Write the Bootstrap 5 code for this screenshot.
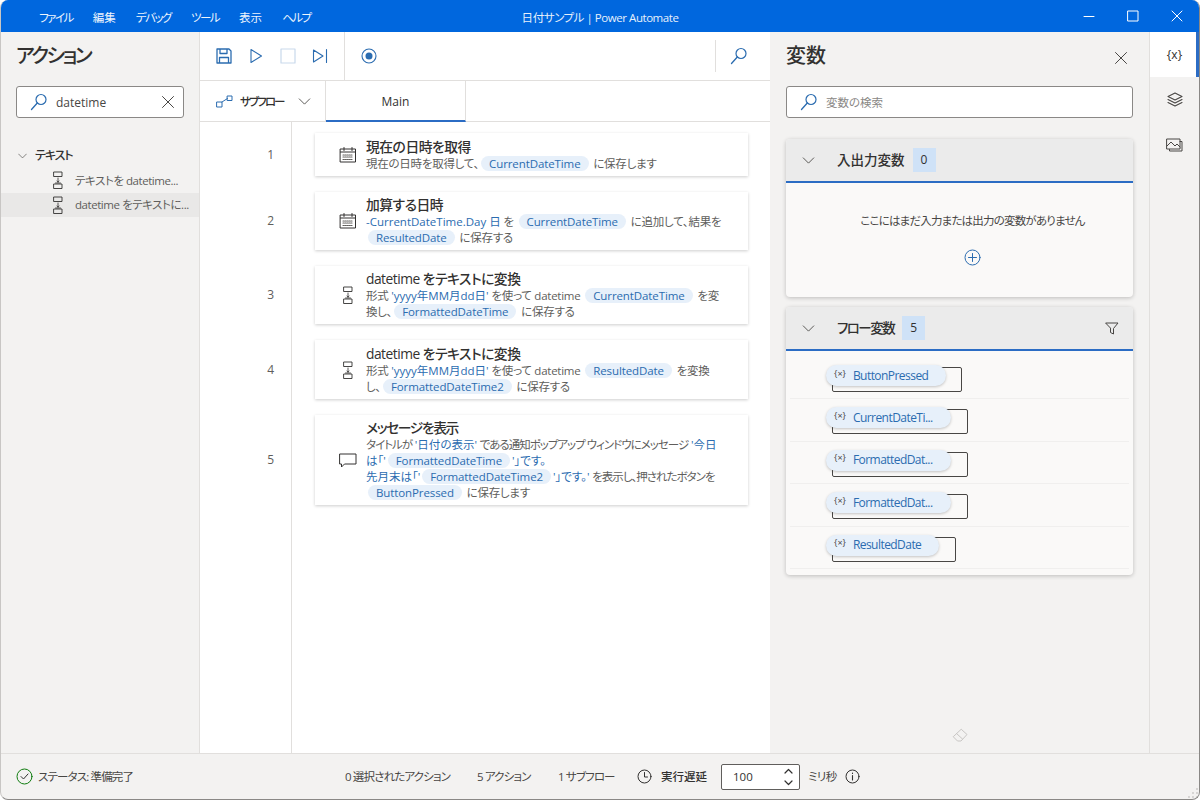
<!DOCTYPE html>
<html lang="ja">
<head>
<meta charset="utf-8">
<title>日付サンプル | Power Automate</title>
<link rel="stylesheet" href="https://cdn.jsdelivr.net/npm/bootstrap@5.3.0/dist/css/bootstrap.min.css">
<style>
html,body{height:800px;overflow:hidden;background:#fff}
body{font-family:"Open Sans","Noto Sans CJK JP",sans-serif;font-feature-settings:"palt";font-size:12px;color:#323130}
svg{display:block;flex:none;fill:none;stroke-linecap:round;stroke-linejoin:round}
.pa-win{width:1200px;height:800px;border-radius:8px;overflow:hidden;border-right:1px solid #8a8886;border-bottom:1px solid #8a8886;border-left:1px solid #c8c6c4;background:#f3f2f1}
.pa-title{height:32px;flex:none;background:#0067de;color:#fff;position:relative}
.pa-menu{padding-left:38px;gap:20px;font-size:11.5px;color:#eef5fd}
.pa-kana{letter-spacing:-1.5px}
.pa-wintitle{position:absolute;left:0;right:0;top:0;line-height:35px;text-align:center;font-size:11.5px;letter-spacing:-.45px;color:#e6f0fb}
.pa-winbtns{position:absolute;right:0;top:0;height:32px}
.pa-winbtns span{width:44px;display:flex;align-items:center;justify-content:center}
.pa-main{height:721px;flex:none}
.pa-left{width:199px;flex:none;border-right:1px solid #e1dfdd}
.pa-h{font-size:20px;font-weight:500;color:#323130;line-height:24px}
.pa-htight{letter-spacing:-2.5px;padding-left:15px;margin-top:12px}
.pa-search{height:32px;background:#fff;border:1px solid #8a8886;border-radius:3px}
.pa-query{margin-left:8px;color:#484644;flex:1 1 auto;font-size:12px;padding-top:1px}
.pa-tree{margin-top:25px}
.pa-group{height:25px;padding-left:17px;gap:8px;font-size:12px;font-weight:500;letter-spacing:-1.1px}
.pa-item{height:24.5px;padding-left:50px;gap:10px;color:#605e5c;font-size:11.5px;letter-spacing:-.45px;white-space:nowrap}
.pa-item.pa-sel{background:#e9e8e7}
.pa-center{width:570px;flex:none;background:#fff}
.pa-toolbar{height:49px;flex:none;border-bottom:1px solid #e1dfdd}
.pa-tools{width:145px;height:48px;border-right:1px solid #e1dfdd;padding-left:16px;gap:0}
.pa-tools span{width:32px;display:flex;justify-content:flex-start}
.pa-rec{padding-left:16px}
.pa-findbtn{width:55px;height:32px;border-left:1px solid #e1dfdd;padding-left:14px}
.pa-tabs{height:41px;flex:none;border-bottom:1px solid #e1dfdd}
.pa-subflow{width:126px;border-right:1px solid #e1dfdd;padding-left:16px;font-size:11.5px;font-weight:500;letter-spacing:-1.9px}
.pa-tabmain{width:140px;margin-bottom:-1px;border-right:1px solid #e1dfdd;border-bottom:2px solid #2b6cc4;font-size:12px;color:#323130;padding-top:3px}
.pa-flow{flex:1 1 auto;min-height:0}
.pa-gutter{width:92px;flex:none;border-right:1px solid #e1dfdd;color:#605e5c;font-size:12px;padding-top:11px;gap:16px}
.pa-gutter div{display:flex;justify-content:flex-end;align-items:center;padding-right:17px}
.pa-h43{height:43px}.pa-h58{height:58px}.pa-h59{height:59px}.pa-h90{height:90px}
.pa-steps{padding:11px 22px 0 23px;gap:16px;min-width:0}
.pa-step{background:#fff;box-shadow:0 1px 3px rgba(0,0,0,.2);padding-left:24px;gap:9px}
.pa-stepicon{width:18px;display:flex;justify-content:center}
.pa-sname{font-size:13.8px;font-weight:500;line-height:17px;color:#323130;letter-spacing:-.5px;margin-bottom:1px}
.pa-stight{letter-spacing:-1.4px}
.pa-sdesc{font-size:11.5px;line-height:16px;color:#605e5c;white-space:nowrap;letter-spacing:-.25px}
.pa-sk{letter-spacing:-1px}
.pa-v{color:#2b6cb0;letter-spacing:0}
.pa-pill{display:inline-block;background:#e7f0fa;color:#2b6cb0;border-radius:9px;padding:0 8px;line-height:15px;margin:0 2px;letter-spacing:-.1px}
.pa-right{width:380px;flex:none;padding:0 16px;border-right:1px solid #e1dfdd}
.pa-panel{background:#faf9f8;border-radius:4px;box-shadow:0 1px 4px rgba(0,0,0,.22);overflow:hidden}
.pa-phead{height:44px;background:#ebebeb;border-bottom:2px solid #2b6cc4;padding-left:16px;font-size:13.5px;font-weight:500}
.pa-count{width:23px;height:24px;background:#cfe2f7;font-size:12px;margin-left:8px;display:flex;align-items:center;justify-content:center;color:#323130}
.pa-pname{margin-left:22px;padding-top:1px}
.pa-ptight{letter-spacing:-1.5px}
.pa-empty{height:114px;padding:29px 0 0 26px;gap:20px;color:#484644;font-size:11.5px;letter-spacing:-.8px}
.pa-vrow{height:42.4px;margin:0 4px;border-bottom:1px solid #f0efee;position:relative}
.pa-box{position:absolute;left:42px;top:10px;height:25px;border:1px solid #484644;border-radius:2px}
.pa-chip{position:absolute;left:36px;top:8px;height:21px;background:#e7f0fa;border-radius:11px;box-shadow:0 1px 3px rgba(0,0,0,.22);color:#2b6cb0;font-size:12px;padding-left:8px;gap:7px;line-height:20px;white-space:nowrap;letter-spacing:-.55px}
.pa-x{font-size:9px;color:#484644;margin-top:-4px;letter-spacing:0}
.pa-eraser{position:absolute;left:182px;bottom:10px}
.pa-strip{flex:1 1 auto}
.pa-striptab{height:45px;display:flex;align-items:center;justify-content:center}
.pa-striptab.pa-on{background:#fff;border-right:3px solid #2b6cc4;font-size:12px;color:#323130;padding-left:3px}
.pa-status{height:46px;flex:none;border-top:1px solid #e1dfdd;color:#484644;font-size:11.5px;position:relative;letter-spacing:-.85px}
.pa-delay{font-weight:500;color:#323130;letter-spacing:0}
.pa-num{width:79px;height:26px;background:#fff;border:1px solid #605e5c;border-radius:2px;padding:0 6px 0 11px;color:#323130;letter-spacing:0}
.pa-grip{position:absolute;right:1px;bottom:1px}
</style>
</head>
<body>
<svg width="0" height="0" style="position:absolute">
<symbol id="i-cal" viewBox="0 0 18 18"><path d="M1.500 3h15v13h-15zM1.500 6h15M5 1.500v3M13 1.500v3" stroke="#323130" stroke-width="1"/><path d="M4 9h10M4 11h10M4 13.500h10" stroke="#605e5c" stroke-width="1.200" stroke-dasharray="1 1"/></symbol>
<symbol id="i-conv" viewBox="0 0 12 18"><rect x="2" y="1" width="8" height="4.500" stroke="#323130" stroke-width=".9"/><rect x="2" y="13" width="8" height="4.500" stroke="#323130" stroke-width=".9"/><path d="M6 7v4.200M5 10 6 11.200 7 10M3.500 12h5" stroke="#323130" stroke-width=".8"/></symbol>
<symbol id="i-find" viewBox="0 0 18 18"><circle cx="11" cy="6.500" r="5" stroke="#2b6cb0" stroke-width="1.200"/><path d="M7.300 10 1.500 16.500" stroke="#2b6cb0" stroke-width="1.300"/></symbol>
<symbol id="i-chev" viewBox="0 0 14 8"><path d="M1 1l6 6 6-6" stroke="#484644" stroke-width="1"/></symbol>
<symbol id="i-x" viewBox="0 0 12 12"><path d="M.5.500l11 11M11.500.500l-11 11" stroke="#484644" stroke-width="1"/></symbol>
</svg>

<div class="pa-win d-flex flex-column">
  <div class="pa-title d-flex align-items-center">
    <div class="pa-menu d-flex pt-1"><span class="pa-kana">ファイル</span><span>編集</span><span class="pa-kana">デバッグ</span><span class="pa-kana">ツール</span><span>表示</span><span class="pa-kana">ヘルプ</span></div>
    <div class="pa-wintitle">日付サンプル | Power Automate</div>
    <div class="pa-winbtns d-flex">
      <span><svg width="12" height="12" viewBox="0 0 12 12"><path d="M1 6.500h10" stroke="#fff" stroke-width="1"/></svg></span>
      <span><svg width="12" height="12" viewBox="0 0 12 12"><rect x="1" y="1" width="10" height="10" stroke="#fff" stroke-width="1"/></svg></span>
      <span><svg width="12" height="12" viewBox="0 0 12 12"><path d="M1 1l10 10M11 1 1 11" stroke="#fff" stroke-width="1"/></svg></span>
    </div>
  </div>

  <div class="pa-main d-flex">
    <div class="pa-left d-flex flex-column">
      <div class="pa-h pa-htight">アクション</div>
      <div class="pa-search d-flex align-items-center" style="margin:18px 15px 0 15px;width:168px;padding-left:13px">
        <svg width="18" height="18"><use href="#i-find"/></svg>
        <span class="pa-query">datetime</span>
        <svg width="12" height="12" style="margin-right:9px"><use href="#i-x"/></svg>
      </div>
      <div class="pa-tree">
        <div class="pa-group d-flex align-items-center"><svg width="9" height="6"><use href="#i-chev"/></svg><span>テキスト</span></div>
        <div class="pa-item d-flex align-items-center"><svg width="14" height="18" viewBox="0 0 14 18"><use href="#i-conv"/></svg><span>テキストを datetime...</span></div>
        <div class="pa-item pa-sel d-flex align-items-center"><svg width="14" height="18"><use href="#i-conv"/></svg><span>datetime をテキストに...</span></div>
      </div>
    </div>

    <div class="pa-center d-flex flex-column">
      <div class="pa-toolbar d-flex align-items-center">
        <div class="pa-tools d-flex align-items-center">
          <span><svg width="16" height="16" viewBox="0 0 16 16"><path d="M1 1h12l2 2v12H1zM4 1v4.500h7V1M3.500 15V9.500h9V15" stroke="#2b6cb0" stroke-width="1.300"/></svg></span>
          <span><svg width="16" height="16" viewBox="0 0 16 16"><path d="M3 1.500v13L13.500 8z" stroke="#2b6cb0" stroke-width="1.100"/></svg></span>
          <span><svg width="16" height="16" viewBox="0 0 16 16"><rect x="1" y="1" width="14" height="14" stroke="#c9d9ec" stroke-width="1.200"/></svg></span>
          <span><svg width="16" height="16" viewBox="0 0 16 16"><path d="M1.500 2v12L11 8zM14.500 1.500v13" stroke="#2b6cb0" stroke-width="1.100"/></svg></span>
        </div>
        <div class="pa-rec flex-grow-1"><svg width="16" height="16" viewBox="0 0 16 16"><circle cx="8" cy="8" r="7" stroke="#2b6cb0" stroke-width="1.100"/><circle cx="8" cy="8" r="3.500" fill="#2b6cb0"/></svg></div>
        <div class="pa-findbtn d-flex align-items-center"><svg width="18" height="18"><use href="#i-find"/></svg></div>
      </div>
      <div class="pa-tabs d-flex">
        <div class="pa-subflow d-flex align-items-center">
          <svg width="17" height="13" viewBox="0 0 17 13"><rect x="1" y="7" width="5" height="5" stroke="#2b6cb0" stroke-width="1"/><rect x="11.500" y="1" width="4.500" height="4.500" stroke="#2b6cb0" stroke-width="1"/><path d="M6 7l5.500-3.500" stroke="#2b6cb0" stroke-width="1"/></svg>
          <span style="margin-left:7px;padding-top:1px">サブフロー</span>
          <svg width="13" height="7" style="margin-left:14px"><use href="#i-chev"/></svg>
        </div>
        <div class="pa-tabmain d-flex align-items-center justify-content-center">Main</div>
      </div>
      <div class="pa-flow d-flex">
        <div class="pa-gutter d-flex flex-column">
          <div class="pa-h43">1</div>
          <div class="pa-h58">2</div>
          <div class="pa-h58">3</div>
          <div class="pa-h59">4</div>
          <div class="pa-h90">5</div>
        </div>
        <div class="pa-steps d-flex flex-column flex-grow-1">
          <div class="pa-step pa-h43 d-flex align-items-center">
            <span class="pa-stepicon"><svg width="18" height="18"><use href="#i-cal"/></svg></span>
            <div>
              <div class="pa-sname">現在の日時を取得</div>
              <div class="pa-sdesc">現在の日時を取得して、<span class="pa-pill">CurrentDateTime</span> に保存します</div>
            </div>
          </div>
          <div class="pa-step pa-h58 d-flex align-items-center">
            <span class="pa-stepicon"><svg width="18" height="18"><use href="#i-cal"/></svg></span>
            <div>
              <div class="pa-sname">加算する日時</div>
              <div class="pa-sdesc"><span class="pa-v">-CurrentDateTime.Day 日</span> を <span class="pa-pill">CurrentDateTime</span> に追加して、結果を<br><span class="pa-pill">ResultedDate</span> に保存する</div>
            </div>
          </div>
          <div class="pa-step pa-h58 d-flex align-items-center">
            <span class="pa-stepicon"><svg width="12" height="18"><use href="#i-conv"/></svg></span>
            <div>
              <div class="pa-sname">datetime をテキストに変換</div>
              <div class="pa-sdesc">形式 <span class="pa-v">'yyyy年MM月dd日'</span> を使って datetime <span class="pa-pill">CurrentDateTime</span> を変<br>換し、<span class="pa-pill">FormattedDateTime</span> に保存する</div>
            </div>
          </div>
          <div class="pa-step pa-h59 d-flex align-items-center">
            <span class="pa-stepicon"><svg width="12" height="18"><use href="#i-conv"/></svg></span>
            <div>
              <div class="pa-sname">datetime をテキストに変換</div>
              <div class="pa-sdesc">形式 <span class="pa-v">'yyyy年MM月dd日'</span> を使って datetime <span class="pa-pill">ResultedDate</span> を変換<br>し、<span class="pa-pill">FormattedDateTime2</span> に保存する</div>
            </div>
          </div>
          <div class="pa-step pa-h90 d-flex align-items-center">
            <span class="pa-stepicon"><svg width="18" height="16" viewBox="0 0 18 16"><path d="M1 2h16v10H5.500L2.500 15v-3H1z" stroke="#323130" stroke-width="1"/></svg></span>
            <div>
              <div class="pa-sname pa-stight">メッセージを表示</div>
              <div class="pa-sdesc"><span class="pa-sk">タイトルが</span> <span class="pa-v">'日付の表示'</span> <span class="pa-sk">である通知ポップアップ ウィンドウにメッセージ</span> <span class="pa-v">'今日</span><br><span class="pa-v">は「'</span><span class="pa-pill">FormattedDateTime</span><span class="pa-v">'」です。</span><br><span class="pa-v">先月末は「'</span><span class="pa-pill">FormattedDateTime2</span><span class="pa-v">'」です。'</span> <span class="pa-sk">を表示し、押されたボタンを</span><br><span class="pa-pill">ButtonPressed</span> に保存します</div>
            </div>
          </div>
        </div>
      </div>
    </div>

    <div class="pa-right position-relative d-flex flex-column">
      <div class="d-flex align-items-center justify-content-between" style="margin-top:12px;height:24px">
        <div class="pa-h">変数</div>
        <svg width="12" height="12" style="margin-right:6px;margin-top:3px"><use href="#i-x"/></svg>
      </div>
      <div class="pa-search d-flex align-items-center" style="margin-top:18px;padding-left:13px">
        <svg width="18" height="18"><use href="#i-find"/></svg>
        <span style="margin-left:8px;color:#8a8886;font-size:11.5px;padding-top:1px">変数の検索</span>
      </div>
      <div class="pa-panel" style="margin-top:21px">
        <div class="pa-phead d-flex align-items-center"><svg width="13" height="7"><use href="#i-chev"/></svg><span class="pa-pname">入出力変数</span><span class="pa-count">0</span></div>
        <div class="pa-empty d-flex flex-column align-items-center">
          <div>ここにはまだ入力または出力の変数がありません</div>
          <svg width="17" height="17" viewBox="0 0 17 17"><circle cx="8.500" cy="8.500" r="7.500" stroke="#2b6cb0" stroke-width="1"/><path d="M8.500 4.500v8M4.500 8.500h8" stroke="#2b6cb0" stroke-width="1"/></svg>
        </div>
      </div>
      <div class="pa-panel" style="margin-top:10px">
        <div class="pa-phead d-flex align-items-center"><svg width="13" height="7"><use href="#i-chev"/></svg><span class="pa-pname pa-ptight">フロー変数</span><span class="pa-count">5</span>
          <svg class="ms-auto" width="14" height="13" viewBox="0 0 14 13" style="margin-right:14px"><path d="M1 1h12L8.500 6.500V12l-3-1.500V6.500z" stroke="#484644" stroke-width="1"/></svg>
        </div>
        <div style="padding-top:6px;height:224px">
          <div class="pa-vrow"><div class="pa-box" style="width:130px"></div><div class="pa-chip d-flex align-items-center" style="width:120px"><span class="pa-x">{×}</span><span>ButtonPressed</span></div></div>
          <div class="pa-vrow"><div class="pa-box" style="width:136px"></div><div class="pa-chip d-flex align-items-center" style="width:125px"><span class="pa-x">{×}</span><span>CurrentDateTi...</span></div></div>
          <div class="pa-vrow"><div class="pa-box" style="width:136px"></div><div class="pa-chip d-flex align-items-center" style="width:125px"><span class="pa-x">{×}</span><span>FormattedDat...</span></div></div>
          <div class="pa-vrow"><div class="pa-box" style="width:136px"></div><div class="pa-chip d-flex align-items-center" style="width:125px"><span class="pa-x">{×}</span><span>FormattedDat...</span></div></div>
          <div class="pa-vrow"><div class="pa-box" style="width:124px"></div><div class="pa-chip d-flex align-items-center" style="width:113px"><span class="pa-x">{×}</span><span>ResultedDate</span></div></div>
        </div>
      </div>
      <svg class="pa-eraser" width="16" height="15" viewBox="0 0 16 15"><path d="M9.500 1.500 15 6.500 9 13H5.500L1.500 9zM4.500 5.500l6 5.500" stroke="#c8c6c4" stroke-width="1"/></svg>
    </div>

    <div class="pa-strip d-flex flex-column">
      <div class="pa-striptab pa-on">{x}</div>
      <div class="pa-striptab"><svg width="16" height="15" viewBox="0 0 16 15"><path d="M8 1l7 3.500L8 8 1 4.500zM1 7.500 8 11l7-3.500M1 10.500 8 14l7-3.500" stroke="#484644" stroke-width="1.100"/></svg></div>
      <div class="pa-striptab"><svg width="17" height="14" viewBox="0 0 17 14"><path d="M1 1h13v10H1zM3.500 11.500V13H16V3.500h-2M1 8l4-4 4 4 2-2 3 3" stroke="#484644" stroke-width="1"/></svg></div>
    </div>
  </div>

  <div class="pa-status d-flex align-items-center">
    <div class="d-flex align-items-center" style="padding-left:15px;width:344px;gap:5px">
      <svg width="17" height="17" viewBox="0 0 17 17"><circle cx="8.500" cy="8.500" r="7.500" stroke="#107c10" stroke-width="1"/><path d="M5 8.500 7.500 11 12 6" stroke="#323130" stroke-width="1"/></svg>
      <span>ステータス: 準備完了</span>
    </div>
    <span style="width:132px">0 選択されたアクション</span>
    <span style="width:81px">5 アクション</span>
    <span style="width:79px">1 サブフロー</span>
    <svg width="15" height="15" viewBox="0 0 15 15"><circle cx="7.500" cy="7.500" r="6.500" stroke="#323130" stroke-width="1"/><path d="M7.500 3.500v4.500h3" stroke="#323130" stroke-width="1"/></svg>
    <span class="pa-delay" style="margin-left:9px;width:60px">実行遅延</span>
    <div class="pa-num d-flex align-items-center justify-content-between">
      <span>100</span>
      <svg width="9" height="20" viewBox="0 0 9 20"><path d="M1 6l3.500-3.500L8 6M1 14l3.500 3.500L8 14" stroke="#323130" stroke-width="1.200"/></svg>
    </div>
    <span style="margin-left:8px;letter-spacing:-.6px">ミリ秒</span>
    <svg width="15" height="15" viewBox="0 0 15 15" style="margin-left:8px"><circle cx="7.500" cy="7.500" r="6.500" stroke="#323130" stroke-width="1"/><path d="M7.500 6.500V11M7.500 4v.5" stroke="#323130" stroke-width="1.100"/></svg>
    <svg class="pa-grip" width="10" height="10" viewBox="0 0 10 10"><path d="M9 1v.01M9 5v.01M5 5v.01M9 9v.01M5 9v.01M1 9v.01" stroke="#a19f9d" stroke-width="1.300"/></svg>
  </div>
</div>
<script src="https://cdn.jsdelivr.net/npm/bootstrap@5.3.0/dist/js/bootstrap.bundle.min.js"></script>
</body>
</html>
